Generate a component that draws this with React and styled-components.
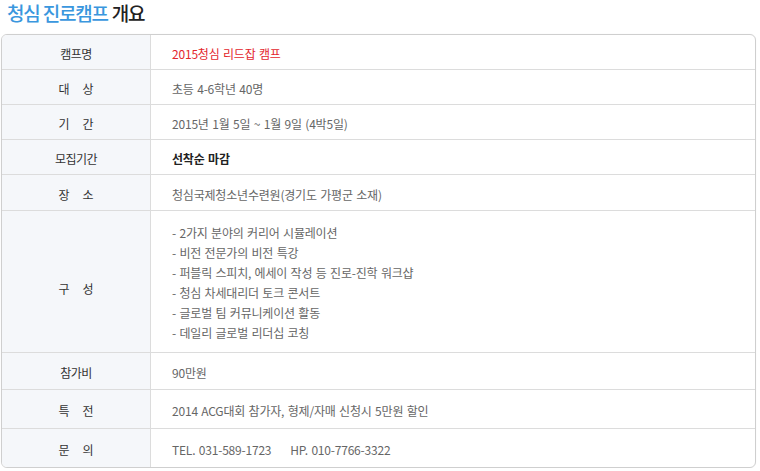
import React from 'react';
import styled, {createGlobalStyle} from 'styled-components';

const GlobalStyle = createGlobalStyle`
  body {
    margin: 0;
    background: #ffffff;
    font-family: "Noto Sans CJK KR", "Noto Sans", sans-serif;
  }
`;

const Page = styled.div`
  width: 760px;
  padding-left: 1px;
  box-sizing: border-box;
`;

const Title = styled.h2`
  margin: 0;
  height: 34px;
  padding-left: 6px;
  font-size: 19px;
  line-height: 26px;
  font-weight: 500;
  letter-spacing: -1.2px;
  color: #222222;
`;

const Accent = styled.span`
  color: #3a97de;
  margin-right: 4px;
`;

const Table = styled.div`
  width: 755px;
  box-sizing: border-box;
  border: 1px solid #cfcfcf;
  border-radius: 6px;
  overflow: hidden;
  box-shadow: 0 0 1px rgba(0, 0, 0, 0.08);
`;

const Row = styled.div`
  display: grid;
  grid-template-columns: 149px 1fr;
  height: ${(props) => props.$h}px;
  border-top: ${(props) => (props.$first ? 'none' : '1px solid #dcdcdc')};
`;

const Label = styled.div`
  display: flex;
  align-items: center;
  justify-content: center;
  background: #f5f7fa;
  border-right: 1px solid #dcdcdc;
  font-size: 12px;
  color: #333333;
  letter-spacing: ${(props) => (props.$wide ? '13px' : '-0.6px')};
  padding-left: ${(props) => (props.$wide ? '13px' : '0')};
  padding-top: ${(props) => (props.$shift ? '14px' : '3px')};
`;

const Value = styled.div`
  display: flex;
  align-items: center;
  padding: 3px 0 0 21px;
  font-size: 12px;
  letter-spacing: -0.2px;
  word-spacing: 1px;
  color: ${(props) => props.$color || '#666666'};
  font-weight: ${(props) => (props.$bold ? 700 : 400)};
`;

const List = styled.ul`
  list-style: none;
  margin: 0;
  padding: 0;
`;

const Item = styled.li`
  line-height: 20px;
  &::before {
    content: '- ';
  }
`;

const Gap = styled.span`
  margin-right: 19px;
`;

const program = [
    '2가지 분야의 커리어 시뮬레이션',
    '비전 전문가의 비전 특강',
    '퍼블릭 스피치, 에세이 작성 등 진로-진학 워크샵',
    '청심 차세대리더 토크 콘서트',
    '글로벌 팀 커뮤니케이션 활동',
    '데일리 글로벌 리더십 코칭',
];

function App() {
    return (
        <Page>
            <GlobalStyle/>
            <Title>
                <Accent>청심 진로캠프</Accent>개요
            </Title>
            <Table>
                <Row $h={34} $first>
                    <Label>캠프명</Label>
                    <Value $color="#e3262d">2015청심 리드잡 캠프</Value>
                </Row>
                <Row $h={34}>
                    <Label $wide>대상</Label>
                    <Value>초등 4-6학년 40명</Value>
                </Row>
                <Row $h={34}>
                    <Label $wide>기간</Label>
                    <Value>2015년 1월 5일 ~ 1월 9일 (4박5일)</Value>
                </Row>
                <Row $h={34}>
                    <Label>모집기간</Label>
                    <Value $color="#222222" $bold>선착순 마감</Value>
                </Row>
                <Row $h={35}>
                    <Label $wide>장소</Label>
                    <Value>청심국제청소년수련원(경기도 가평군 소재)</Value>
                </Row>
                <Row $h={141}>
                    <Label $wide $shift>구성</Label>
                    <Value>
                        <List>
                            {program.map((item) => (
                                <Item key={item}>{item}</Item>
                            ))}
                        </List>
                    </Value>
                </Row>
                <Row $h={36}>
                    <Label>참가비</Label>
                    <Value>90만원</Value>
                </Row>
                <Row $h={38}>
                    <Label $wide>특전</Label>
                    <Value>2014 ACG대회 참가자, 형제/자매 신청시 5만원 할인</Value>
                </Row>
                <Row $h={38}>
                    <Label $wide>문의</Label>
                    <Value>
                        <Gap>TEL. 031-589-1723</Gap>HP. 010-7766-3322
                    </Value>
                </Row>
            </Table>
        </Page>
    );
}

export default App;
